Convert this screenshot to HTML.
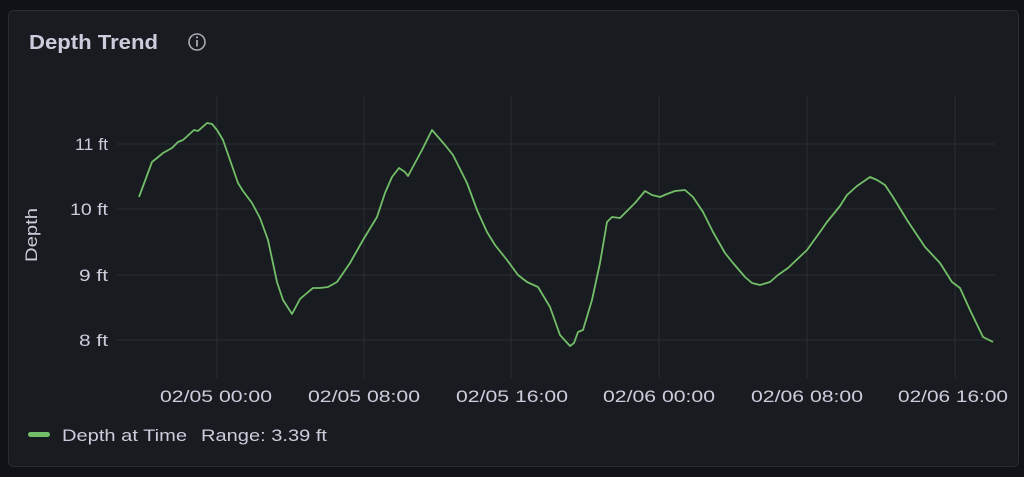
<!DOCTYPE html>
<html><head><meta charset="utf-8"><style>
html,body{margin:0;padding:0;background:#111217;width:1024px;height:477px;overflow:hidden}
svg{display:block}
text{font-family:"Liberation Sans",sans-serif;fill:#ccccdc}
</style></head><body>
<svg width="1024" height="477" viewBox="0 0 1024 477">
<rect x="8.5" y="10.5" width="1010" height="456" rx="5" fill="#181b1f" stroke="#2a2c31"/>
<text x="29" y="49" font-size="20" font-weight="600" fill="#d8d9e3" textLength="129" lengthAdjust="spacingAndGlyphs">Depth Trend</text>
<circle cx="197" cy="42" r="8" fill="none" stroke="#a8a9b3" stroke-width="1.6"/>
<line x1="197" y1="40" x2="197" y2="46.5" stroke="#a8a9b3" stroke-width="1.8"/>
<circle cx="197" cy="37.3" r="1.1" fill="#a8a9b3"/>
<g stroke="#2a2c31" stroke-width="1">
<line x1="117" y1="144" x2="995" y2="144"/>
<line x1="117" y1="209" x2="995" y2="209"/>
<line x1="117" y1="275" x2="995" y2="275"/>
<line x1="117" y1="340" x2="995" y2="340"/>
<line x1="217" y1="96" x2="217" y2="378"/>
<line x1="364" y1="96" x2="364" y2="378"/>
<line x1="511" y1="96" x2="511" y2="378"/>
<line x1="659" y1="96" x2="659" y2="378"/>
<line x1="807" y1="96" x2="807" y2="378"/>
<line x1="955" y1="96" x2="955" y2="378"/>
</g>
<g font-size="17">
<text x="75" y="150" textLength="33" lengthAdjust="spacingAndGlyphs">11 ft</text>
<text x="70" y="215" textLength="38" lengthAdjust="spacingAndGlyphs">10 ft</text>
<text x="79" y="281" textLength="29" lengthAdjust="spacingAndGlyphs">9 ft</text>
<text x="79" y="346" textLength="29" lengthAdjust="spacingAndGlyphs">8 ft</text>
</g>
<text x="0" y="0" font-size="17" transform="translate(37,262) rotate(-90)" textLength="54" lengthAdjust="spacingAndGlyphs">Depth</text>
<g font-size="17">
<text x="160" y="402" textLength="112" lengthAdjust="spacingAndGlyphs">02/05 00:00</text>
<text x="308" y="402" textLength="112" lengthAdjust="spacingAndGlyphs">02/05 08:00</text>
<text x="456" y="402" textLength="112" lengthAdjust="spacingAndGlyphs">02/05 16:00</text>
<text x="603" y="402" textLength="112" lengthAdjust="spacingAndGlyphs">02/06 00:00</text>
<text x="751" y="402" textLength="112" lengthAdjust="spacingAndGlyphs">02/06 08:00</text>
<text x="898" y="402" textLength="110" lengthAdjust="spacingAndGlyphs">02/06 16:00</text>
</g>
<polyline fill="none" stroke="#73bf69" stroke-width="1.8" stroke-linejoin="round" points="139,197 152,162 157,158 163,153 172,148 178,142 183,140 194,130 198,131 207,123 212,124 217,130 223,140 230,160 238,183 243,191 252,203 260,218 268,240 277,282 283,300 292,314 300,299 307,293 313,288 320,288 328,287 337,282 350,263 363,240 377,217 385,193 392,177 399,168 405,172 408,176 422,150 432,130 445,145 453,155 467,183 477,210 487,232 495,245 507,260 518,275 527,282 538,287 550,307 560,335 570,346 574,343 578,332 583,330 592,300 600,263 607,222 612,217 620,218 628,210 635,203 645,191 652,195 660,197 667,194 675,191 685,190 693,197 703,212 713,232 725,253 733,263 745,277 752,283 760,285 770,282 778,275 788,268 807,250 820,232 827,222 840,206 847,195 857,186 870,177 877,180 885,185 893,197 907,220 925,247 940,263 952,282 960,288 970,310 983,337 993,342"/>
<rect x="28" y="432" width="22" height="5" rx="2.5" fill="#73bf69"/>
<text x="62" y="441" font-size="17" textLength="125" lengthAdjust="spacingAndGlyphs">Depth at Time</text>
<text x="201" y="441" font-size="17" textLength="126" lengthAdjust="spacingAndGlyphs">Range: 3.39 ft</text>
</svg>
</body></html>
